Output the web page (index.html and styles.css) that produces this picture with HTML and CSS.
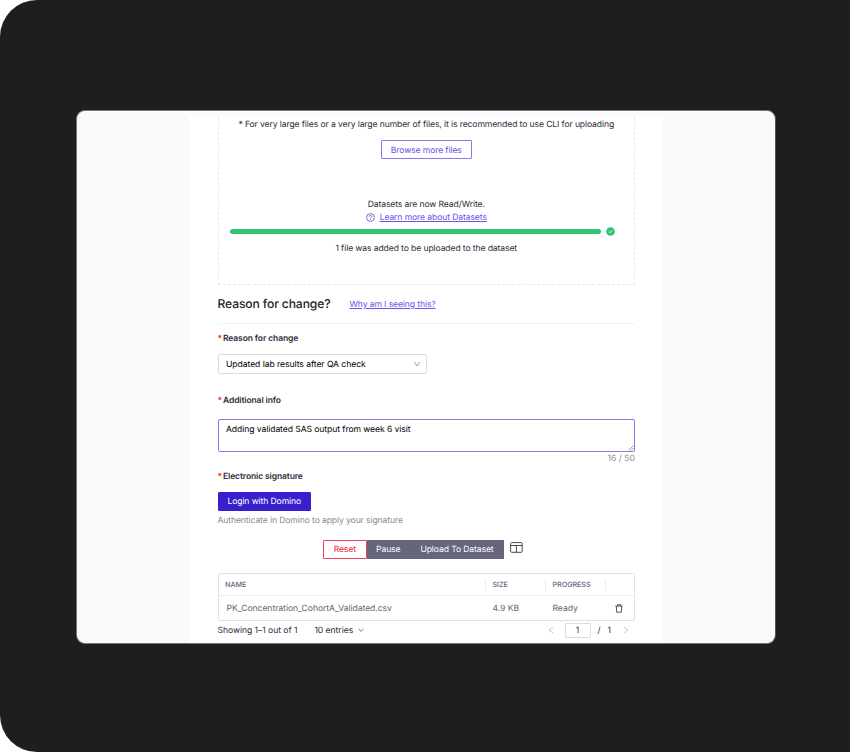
FILE: index.html
```html
<!DOCTYPE html>
<html lang="en">
<head>
  <meta charset="UTF-8">
  <title>Upload to dataset</title>
  <link rel="stylesheet" href="styles.css">
</head>
<body>
  <div class="stage">
    <div class="window">
      <div class="panel">
        <div class="dropzone">
          <div class="hint"><span>* For very large files or a very large number of files, it is recommended to use CLI for uploading</span></div>
          <button type="button" class="btn btn-outline">Browse more files</button>
          <div class="status"><span>Datasets are now Read/Write.</span></div>
          <div class="learn">
            <svg width="9" height="9" viewBox="0 0 18 18" fill="none" stroke="#6b52e8" stroke-width="1.7"><circle cx="9" cy="9" r="7.8"/><path d="M6.4 7.2a2.6 2.3 0 1 1 3.8 2c-.8.4-1.2.8-1.2 1.6M9 12.3v1.4"/></svg>
            <a href="#">Learn more about Datasets</a>
          </div>
          <div class="progress">
            <div class="bar"></div>
            <svg width="9" height="9" viewBox="0 0 18 18"><circle cx="9" cy="9" r="8.6" fill="#2fc471"/><path d="M5.8 9.2l2.3 2.4 4.2-5" fill="none" stroke="#fff" stroke-width="1.6"/></svg>
          </div>
          <div class="added"><span>1 file was added to be uploaded to the dataset</span></div>
        </div>

        <div class="section-head">
          <h2>Reason for change?</h2>
          <a href="#">Why am I seeing this?</a>
        </div>

        <div class="label"><i>*</i><span>Reason for change</span></div>
        <div class="select">
          <span>Updated lab results after QA check</span>
          <svg width="8" height="8" viewBox="0 0 16 16" fill="none" stroke="#8c8c98" stroke-width="1.7"><path d="M2.5 4l5.5 8 5.5-8"/></svg>
        </div>

        <div class="label label-info"><i>*</i><span>Additional info</span></div>
        <div class="textarea">
          <span>Adding validated SAS output from week 6 visit</span>
          <svg class="grip" width="6" height="6" viewBox="0 0 6 6" stroke="#777" stroke-width=".7"><path d="M.5 5.5l5-5M3 5.5L5.5 3"/></svg>
        </div>
        <div class="count"><span>16 / 50</span></div>

        <div class="label label-sign"><i>*</i><span>Electronic signature</span></div>
        <button type="button" class="btn btn-primary">Login with Domino</button>
        <div class="help"><span>Authenticate in Domino to apply your signature</span></div>

        <div class="actions">
          <button type="button" class="btn btn-reset">Reset</button>
          <button type="button" class="btn btn-dark btn-pause">Pause</button>
          <button type="button" class="btn btn-dark btn-upload">Upload To Dataset</button>
          <svg width="13" height="11" viewBox="0 0 13 11" fill="none" stroke="#4a4a55" stroke-width="1"><rect x=".6" y=".6" width="11.6" height="9.7" rx=".9"/><path d="M.6 3.5h11.6M6.4 3.5v6.8"/></svg>
        </div>

        <div class="table">
          <div class="row row-head">
            <div class="c-name"><span>NAME</span></div>
            <div class="c-size"><span>SIZE</span></div>
            <div class="c-progress"><span>PROGRESS</span></div>
            <div class="c-action"></div>
          </div>
          <div class="row row-body">
            <div class="c-name"><span>PK_Concentration_CohortA_Validated.csv</span></div>
            <div class="c-size"><span>4.9 KB</span></div>
            <div class="c-progress"><span>Ready</span></div>
            <div class="c-action"><svg width="8" height="9" viewBox="0 0 8 9" fill="none" stroke="#44444e" stroke-width=".9"><path d="M.3 2.1h7.4M2.4 2V.7h3.2V2M1.3 2.1l.3 6.1h4.8l.3-6.1"/></svg></div>
          </div>
        </div>

        <div class="footer">
          <span class="showing">Showing 1–1 out of 1</span>
          <span class="entries">10 entries</span>
          <svg width="6" height="6" viewBox="0 0 6 6" fill="none" stroke="#66666f" stroke-width=".8"><path d="M.6 1.6L3 4.4l2.4-2.8"/></svg>
          <div class="pager">
            <svg width="6" height="8" viewBox="0 0 6 8" fill="none" stroke="#c0c0c6" stroke-width=".9"><path d="M5 1L1 4l4 3"/></svg>
            <div class="page"><span>1</span></div>
            <span class="slash">/</span>
            <span class="total">1</span>
            <svg width="6" height="8" viewBox="0 0 6 8" fill="none" stroke="#c0c0c6" stroke-width=".9"><path d="M1 1l4 3-4 3"/></svg>
          </div>
        </div>
      </div>
    </div>
  </div>
</body>
</html>
```

FILE: styles.css
```css
* { box-sizing: border-box; }
body { margin: 0; background: #fff; font-family: Inter, "Liberation Sans", sans-serif; font-size: 8.6px; letter-spacing: -0.11px; color: #2e2e38; text-rendering: geometricPrecision; }
svg { display: block; flex: none; }
a { color: #6b52e8; text-decoration: underline; }
span, a, h2 { white-space: nowrap; }
span, a { padding-top: 1px; }

.stage { width: 850px; height: 752px; padding: 110px 0 0 76px; background: #1e1e1e; border-radius: 37px 0 0 37px; overflow: hidden; }
.window { width: 700px; height: 534px; padding-top: 6px; background: #f9fafc; border: 1px solid #77777a; border-right-color: #555; border-radius: 9px; overflow: hidden; }
.panel { width: 474px; height: 526px; margin-left: 112px; padding: 0 28px 0 28.5px; background: #fff; }

.btn { display: flex; align-items: center; justify-content: center; height: 19px; padding: 2px 0 0; border: 1px solid; border-radius: 1px; font: inherit; letter-spacing: inherit; text-rendering: inherit; white-space: nowrap; }
.btn-outline { width: 91px; margin-top: 9px; color: #6b52e8; border-color: #8b78ee; background: #fff; }
.btn-primary { width: 93.5px; margin-top: 9px; color: #fff; background: #3820cf; border-color: #3820cf; }

.dropzone { display: flex; flex-direction: column; align-items: center; height: 168px; border: 1px dashed #e8e8ec; border-top: none; }
.hint { display: flex; align-items: center; height: 14px; }
.status { display: flex; align-items: center; height: 14px; margin-top: 38px; }
.learn { display: flex; align-items: center; gap: 5px; height: 13px; }
.progress { display: flex; align-items: center; gap: 4.5px; width: 393px; height: 14px; }
.bar { width: 371.5px; height: 5px; border-radius: 3px; background: #2fc471; }
.added { display: flex; align-items: center; height: 14px; margin-top: 3px; }

.section-head { display: flex; align-items: center; gap: 19px; height: 38.5px; border-bottom: 1px solid #f2f2f4; }
.section-head h2 { margin: 0; font-size: 12.1px; font-weight: 500; color: #22222a; }
.section-head a { padding-top: 2px; }

.label { display: flex; align-items: center; gap: 2px; height: 14px; margin-top: 7px; font-size: 8.5px; font-weight: 600; }
.label i { width: 4px; padding-top: 2px; color: #f5222d; font-style: normal; }
.label span { padding-top: 2px; margin-left: -.5px; }
.label-info { margin-top: 19px; }
.label-sign { margin-top: 5px; }
.select { display: flex; align-items: center; justify-content: space-between; width: 209px; height: 20px; margin-top: 9px; padding: 0 5px 0 7.5px; border: 1px solid #dcdce0; border-radius: 2px; letter-spacing: -0.06px; color: #000; }
.select span { padding-top: 2px; }
.textarea { position: relative; height: 33px; margin-top: 12px; padding: 4px 7.5px; border: 1px solid #8b78ee; border-radius: 2px; letter-spacing: -0.08px; color: #000; line-height: 12px; }
.grip { position: absolute; right: 0; bottom: 0; }
.count { display: flex; align-items: center; justify-content: flex-end; height: 12px; letter-spacing: 0; color: #8c8c8c; }
.count span, .help span { padding-top: 2px; }
.help { display: flex; align-items: center; height: 14px; margin-top: 2px; color: #8c8c8c; }

.actions { display: flex; height: 19px; margin: 13px 0 0 105.5px; }
.actions svg { margin: 2.5px 0 0 6px; }
.btn-reset { width: 43.5px; color: #f0203c; border-color: #f0405a; background: #fff; }
.btn-dark { color: #fff; background: #65657b; border-color: #65657b; border-radius: 0; }
.btn-pause { width: 43.5px; }
.btn-upload { width: 94px; }

.table { height: 47.5px; margin-top: 14.5px; border: 1px solid #e0e0e5; border-radius: 2px; letter-spacing: -0.05px; color: #65657b; }
.row { display: flex; align-items: center; }
.row > div { display: flex; align-items: center; padding-left: 6.5px; }
.row-head { height: 22px; border-bottom: 1px solid #eeeef2; font-size: 7.2px; font-weight: 500; }
.row-head > div { height: 12px; }
.row-head span { padding-top: 0; }
.row-head > div + div { border-left: 1px solid #ececf0; }
.row-body { height: 24px; }
.row-body .c-name { padding-left: 8px; }
.row-body .c-size, .row-body .c-progress { padding-left: 7.5px; }
.c-name { width: 266.5px; }
.c-size { width: 60px; }
.c-progress { width: 59.5px; }
.row-body .c-action { padding-left: 10.5px; }

.footer { display: flex; align-items: center; height: 19px; letter-spacing: -0.05px; }
.entries { margin: 0 5px 0 17px; }
.pager { display: flex; align-items: center; margin-left: auto; padding-right: 6px; }
.page { display: flex; align-items: center; justify-content: center; width: 26px; height: 15px; margin: 0 7px 0 11px; border: 1px solid #dcdce0; border-radius: 1px; }
.total { margin: 0 12px 0 7px; }
```
